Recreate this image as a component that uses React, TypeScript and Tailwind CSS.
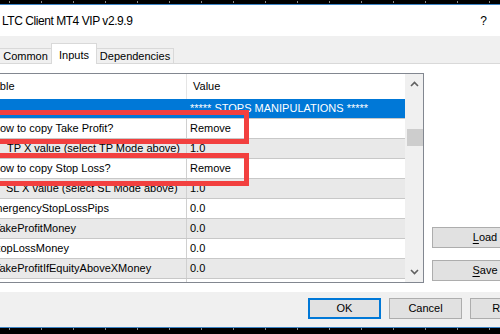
import React from "react";

type Row = {
  name: string;
  value: string;
  indent: string;
  gray?: boolean;
  selected?: boolean;
};

const rows: Row[] = [
  { name: "", value: "***** STOPS MANIPULATIONS *****", indent: "ml-0", selected: true },
  { name: "How to copy Take Profit?", value: "Remove", indent: "-ml-[8px]" },
  { name: "TP X value (select TP Mode above)", value: "1.0", indent: "ml-[7px]", gray: true },
  { name: "How to copy Stop Loss?", value: "Remove", indent: "-ml-[8px]" },
  { name: "SL X value (select SL Mode above)", value: "1.0", indent: "ml-[6px]", gray: true },
  { name: "EmergencyStopLossPips", value: "0.0", indent: "-ml-[14px]" },
  { name: "TakeProfitMoney", value: "0.0", indent: "-ml-[6px]", gray: true },
  { name: "StopLossMoney", value: "0.0", indent: "-ml-[10px]" },
  { name: "TakeProfitIfEquityAboveXMoney", value: "0.0", indent: "-ml-[6px]", gray: true },
  { name: "", value: "", indent: "ml-0" },
];

const ticks = Array.from({ length: 16 }, (_, i) => i);

function Chevron({ down }: { down?: boolean }) {
  return (
    <svg width="9" height="6" viewBox="0 0 9 6" className={down ? "rotate-180" : ""}>
      <path d="M1 5 L4.5 1.5 L8 5" fill="none" stroke="#606060" strokeWidth="1.6" />
    </svg>
  );
}

function DialogButton({ children, active }: { children: React.ReactNode; active?: boolean }) {
  return (
    <div
      className={`flex h-[21px] w-[73px] shrink-0 items-center justify-center bg-[#e1e1e1] ${
        active ? "border-2 border-[#0078d7]" : "border border-[#adadad]"
      }`}
    >
      {children}
    </div>
  );
}

export default function App() {
  return (
    <div className="relative flex h-[334px] w-[500px] flex-col overflow-hidden bg-[#f0f0f0] font-['Liberation_Sans',Arial,sans-serif] text-[11px] text-black">
      {/* desktop strip above the window */}
      <div className="flex h-[4px] items-start gap-[31px] bg-black pl-[9px]">
        {ticks.map((t) => (
          <div key={t} className="mt-[1px] h-[2px] w-px bg-[#8a8a8a]" />
        ))}
      </div>
      <div className="h-[1px] bg-[#3c84c6]" />

      {/* title bar */}
      <div className="flex h-[31px] items-center justify-between bg-white pl-[2px] pr-[13px]">
        <span className="text-[12px] tracking-[-0.45px]">LTC Client MT4 VIP v2.9.9</span>
        <span className="text-[12px]">?</span>
      </div>

      {/* tabs */}
      <div className="flex h-[28px] items-end border-b border-[#d9d9d9]">
        <div className="flex h-[15px] w-[51px] items-center justify-center border-t border-[#d9d9d9]">
          Common
        </div>
        <div className="relative -mb-px flex h-[21px] w-[46px] items-start justify-center border-x border-t border-[#d9d9d9] bg-white pt-[3px]">
          Inputs
        </div>
        <div className="flex h-[15px] w-[77px] items-center justify-center border-r border-t border-[#d9d9d9]">
          Dependencies
        </div>
      </div>

      {/* tab page */}
      <div className="flex h-[228px] bg-white pt-[9px]">
        <div className="flex h-[210px] w-[424px] shrink-0 border-y border-r border-[#828790]">
          <div className="flex w-[405px] flex-col overflow-hidden">
            <div className="flex h-[25px] shrink-0 items-center bg-white">
              <div className="flex h-full w-[187px] shrink-0 items-center overflow-hidden whitespace-nowrap border-r border-[#e5e5e5]">
                <span className="-ml-[25px]">Variable</span>
              </div>
              <span className="pl-[6px]">Value</span>
            </div>
            {rows.map((r, i) => (
              <div
                key={i}
                className={`flex h-[20px] shrink-0 border-b border-[#c8c8c8] ${
                  r.selected ? "bg-[#0078d7] text-white" : r.gray ? "bg-[#e9e9e9]" : "bg-white"
                }`}
              >
                <div
                  className={`flex h-full w-[187px] shrink-0 items-center overflow-hidden whitespace-nowrap border-r ${
                    r.selected ? "border-[#0078d7]" : "border-[#d0d0d0]"
                  }`}
                >
                  <span className={`${r.indent} shrink-0`}>{r.name}</span>
                </div>
                <div className="flex items-center whitespace-nowrap pl-[3px]">{r.value}</div>
              </div>
            ))}
          </div>
          <div className="flex w-[18px] flex-col items-center bg-[#f0f0f0] pl-[1px]">
            <div className="mt-[7px]">
              <Chevron />
            </div>
            <div className="mt-[42px] h-[17px] w-[16px] bg-[#cdcdcd]" />
            <div className="mt-auto mb-[7px]">
              <Chevron down />
            </div>
          </div>
        </div>

        <div className="ml-[8px] mt-[154px] flex flex-col gap-[12px]">
          <div className="flex h-[21px] w-[106px] items-center justify-center border border-[#adadad] bg-[#e1e1e1]">
            <span>
              <span className="underline underline-offset-2">L</span>oad
            </span>
          </div>
          <div className="flex h-[21px] w-[106px] items-center justify-center border border-[#adadad] bg-[#e1e1e1]">
            <span>
              <span className="underline underline-offset-2">S</span>ave
            </span>
          </div>
        </div>
      </div>

      {/* dialog buttons */}
      <div className="flex h-[35px] gap-[8px] pl-[308px] pt-[6px]">
        <DialogButton active>OK</DialogButton>
        <DialogButton>Cancel</DialogButton>
        <DialogButton>Reset</DialogButton>
      </div>

      {/* desktop strip below the window */}
      <div className="h-[1px] bg-[#3c84c6]" />
      <div className="flex h-[6px] items-start gap-[31px] bg-black pl-[9px]">
        {ticks.map((t) => (
          <div key={t} className="h-[2px] w-px bg-[#8a8a8a]" />
        ))}
      </div>

      {/* red highlight boxes drawn over the list */}
      <div className="absolute left-[-10px] top-[110px] h-[34px] w-[259px] border-[5px] border-[#f2403f]" />
      <div className="absolute left-[-10px] top-[153px] h-[33px] w-[259px] border-[5px] border-[#f2403f]" />
    </div>
  );
}
